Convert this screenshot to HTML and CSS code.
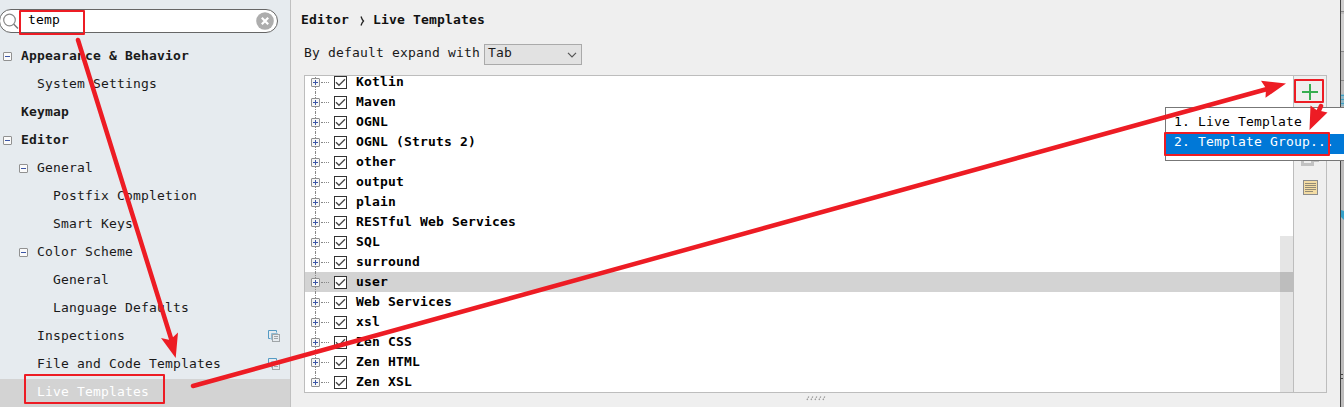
FILE: index.html
```html
<!DOCTYPE html>
<html lang="en">
<head>
<meta charset="utf-8">
<title>Settings</title>
<link rel="stylesheet" href="styles.css">
</head>
<body>
<svg class="defs" width="0" height="0">
  <symbol id="minus" viewBox="0 0 9 9"><rect x=".5" y=".5" width="8" height="8" rx=".5" fill="#fafafa" stroke="#919191"/><path d="M2 4.5h5" stroke="#3c56a6"/></symbol>
  <symbol id="plus" viewBox="0 0 9 9"><rect x=".5" y=".5" width="8" height="8" rx=".5" fill="#f5f5f5" stroke="#919191"/><path d="M2 4.5h5M4.5 2v5" stroke="#3c56a6"/></symbol>
  <symbol id="check" viewBox="0 0 13 13"><rect x=".5" y=".5" width="12" height="12" fill="#fff" stroke="#333"/><path d="M2 6.300l3 3 6-6" fill="none" stroke="#444" stroke-width="1.300"/></symbol>
  <symbol id="copy" viewBox="0 0 12 12"><path d="M2.500 8.500h-2v-8h8v2" fill="none" stroke="#559bc4"/><path d="M4.500 9.500h-1v-6h6v1" fill="none" stroke="#8ebad2"/><rect x="4.500" y="4.500" width="7" height="7" fill="#e6ebef" stroke="#a0a5a8"/><path d="M6 6.500h4M6 8.500h4" stroke="#a0a5a8"/></symbol>
</svg>
<div class="window">
  <aside class="sidebar">
    <div class="search">
      <svg class="lens" width="17" height="17" viewBox="0 0 17 17"><circle cx="6.500" cy="7" r="5.800" fill="none" stroke="#888" stroke-width="1.200"/><path d="M10.800 11.200l4.200 4.200" stroke="#777" stroke-width="1.400"/></svg>
      <span class="query">temp</span>
      <svg class="clear" width="18" height="18" viewBox="0 0 18 18"><circle cx="9" cy="9" r="8.800" fill="#adadad"/><path d="M5.800 5.800l6.400 6.400M12.200 5.800l-6.400 6.400" stroke="#fff" stroke-width="2.200"/></svg>
    </div>
    <nav class="nav">
      <div class="item top"><svg class="fold"><use href="#minus"/></svg><b>Appearance &amp; Behavior</b></div>
      <div class="item mid"><i class="fold"></i>System Settings</div>
      <div class="item top"><i class="fold"></i><b>Keymap</b></div>
      <div class="item top"><svg class="fold"><use href="#minus"/></svg><b>Editor</b></div>
      <div class="item mid"><svg class="fold"><use href="#minus"/></svg>General</div>
      <div class="item deep"><i class="fold"></i>Postfix Completion</div>
      <div class="item deep"><i class="fold"></i>Smart Keys</div>
      <div class="item mid"><svg class="fold"><use href="#minus"/></svg>Color Scheme</div>
      <div class="item deep"><i class="fold"></i>General</div>
      <div class="item deep"><i class="fold"></i>Language Defaults</div>
      <div class="item mid"><i class="fold"></i>Inspections<svg class="copy"><use href="#copy"/></svg></div>
      <div class="item mid"><i class="fold"></i>File and Code Templates<svg class="copy"><use href="#copy"/></svg></div>
      <div class="item mid current"><i class="fold"></i>Live Templates</div>
    </nav>
  </aside>
  <main class="content">
    <h1 class="crumbs">Editor<svg width="5" height="10" viewBox="0 0 5 10"><path d="M1 .5Q2 3.500 3.500 5 2 6.500 1 9.500" fill="none" stroke="#222" stroke-width="1.300"/></svg>Live Templates</h1>
    <div class="expand">By default expand with
      <span class="select">Tab<svg width="10" height="6" viewBox="0 0 10 6"><path d="M1 .8l4 4 4-4" fill="none" stroke="#555" stroke-width="1.200"/></svg></span>
    </div>
    <section class="panel">
      <div class="list">
        <div class="row"><svg class="box"><use href="#plus"/></svg><i class="dots"></i><svg class="tick"><use href="#check"/></svg>Kotlin</div>
        <div class="row"><svg class="box"><use href="#plus"/></svg><i class="dots"></i><svg class="tick"><use href="#check"/></svg>Maven</div>
        <div class="row"><svg class="box"><use href="#plus"/></svg><i class="dots"></i><svg class="tick"><use href="#check"/></svg>OGNL</div>
        <div class="row"><svg class="box"><use href="#plus"/></svg><i class="dots"></i><svg class="tick"><use href="#check"/></svg>OGNL (Struts 2)</div>
        <div class="row"><svg class="box"><use href="#plus"/></svg><i class="dots"></i><svg class="tick"><use href="#check"/></svg>other</div>
        <div class="row"><svg class="box"><use href="#plus"/></svg><i class="dots"></i><svg class="tick"><use href="#check"/></svg>output</div>
        <div class="row"><svg class="box"><use href="#plus"/></svg><i class="dots"></i><svg class="tick"><use href="#check"/></svg>plain</div>
        <div class="row"><svg class="box"><use href="#plus"/></svg><i class="dots"></i><svg class="tick"><use href="#check"/></svg>RESTful Web Services</div>
        <div class="row"><svg class="box"><use href="#plus"/></svg><i class="dots"></i><svg class="tick"><use href="#check"/></svg>SQL</div>
        <div class="row"><svg class="box"><use href="#plus"/></svg><i class="dots"></i><svg class="tick"><use href="#check"/></svg>surround</div>
        <div class="row picked"><svg class="box"><use href="#plus"/></svg><i class="dots"></i><svg class="tick"><use href="#check"/></svg>user</div>
        <div class="row"><svg class="box"><use href="#plus"/></svg><i class="dots"></i><svg class="tick"><use href="#check"/></svg>Web Services</div>
        <div class="row"><svg class="box"><use href="#plus"/></svg><i class="dots"></i><svg class="tick"><use href="#check"/></svg>xsl</div>
        <div class="row"><svg class="box"><use href="#plus"/></svg><i class="dots"></i><svg class="tick"><use href="#check"/></svg>Zen CSS</div>
        <div class="row"><svg class="box"><use href="#plus"/></svg><i class="dots"></i><svg class="tick"><use href="#check"/></svg>Zen HTML</div>
        <div class="row last"><svg class="box"><use href="#plus"/></svg><i class="dots"></i><svg class="tick"><use href="#check"/></svg>Zen XSL</div>
        <div class="thumb"></div>
      </div>
      <div class="tools">
        <svg width="16" height="16" viewBox="0 0 16 16"><path d="M0 8h16M8 0v16" stroke="#36ae50" stroke-width="2"/></svg>
        <svg class="dup" width="18" height="16" viewBox="0 0 18 16"><path d="M1.500 1v13.500h10V11M12 10.500h5V5" fill="none" stroke="#c2c2c2" stroke-width="3"/></svg>
        <svg width="15" height="15" viewBox="0 0 15 15"><rect x=".5" y=".5" width="14" height="14" fill="#f3dca4" stroke="#8c8c8c"/><path d="M2 3.500h11M2 5.500h11M2 7.500h11M2 9.500h11M2 11.500h8" stroke="#938b76"/></svg>
      </div>
    </section>
    <div class="grip"><svg width="20" height="6" viewBox="0 0 20 6"><path d="M1 5l2-4M5 5l2-4M9 5l2-4M13 5l2-4M17 5l2-4" stroke="#999" stroke-width="1.300" stroke-dasharray="1.500 1"/></svg></div>
  </main>
  <div class="edge">
    <svg width="3" height="407" viewBox="0 0 3 407"><path d="M0 0h3v12H0zM0 14h3v37H0z" fill="#d0cfcf"/><path d="M0 11.500h3M0 51.500h3M0 80.500h3" stroke="#888"/><path d="M0 94h3v12H0z" fill="#8fb7c6"/><path d="M0 95.500h3M0 99.500h3M0 103.500h3" stroke="#3da0c5"/><path d="M0 210l3 1v9l-3-3z" fill="#35a0c8"/><path d="M0 374.500h2M0 378.500h2" stroke="#444"/></svg>
  </div>
</div>
<div class="menu">
  <div class="option">1. Live Template</div>
  <div class="option active">2. Template Group...</div>
</div>
<svg class="marks" width="1344" height="407" viewBox="0 0 1344 407">
  <g fill="none" stroke="#ed1c24" stroke-width="2" stroke-linejoin="round">
    <rect x="20" y="11" width="64" height="23"/>
    <rect x="25" y="375" width="139" height="28"/>
    <rect x="1295" y="80" width="28" height="22"/>
    <rect x="1165" y="133" width="164" height="22"/>
  </g>
  <g stroke="#ed1c24" stroke-width="4.500" stroke-linecap="round">
    <path d="M78 40l93.500 300M193 386L1269 88.500M1321 106l-5 11"/>
  </g>
  <g fill="#ed1c24">
    <path d="M175.700 358L161 338l9 2 8-7.500z"/>
    <path d="M1286 83.500L1261 80.800l5 7.500-.500 9.500z"/>
    <path d="M1309.500 130L1310.500 105.500l6 4.500 11 2.500z"/>
  </g>
</svg>
</body>
</html>
```
FILE: styles.css
```css
* { box-sizing: border-box; }
body { margin: 0; width: 1344px; height: 407px; overflow: hidden; position: relative; background: #efefef; color: #1a1a1a; font: 13px/20px "DejaVu Sans Mono", "Liberation Mono", monospace; letter-spacing: .174px; }
svg { display: block; flex: none; }
.defs { position: absolute; }
.window { display: flex; height: 407px; }

.sidebar { width: 291px; background: #e6ebef; border-right: 1px solid #c0c0c0; padding-top: 9px; overflow: hidden; }
.search { width: 279px; height: 24px; margin-left: -1px; display: flex; align-items: center; background: #fff; border: 1px solid #666; border-radius: 12px; padding: 0 3px 0 3px; }
.query { flex: 1; padding: 0 0 3px 8px; color: #000; }
.nav { padding-top: 10px; }
.item { height: 28px; display: flex; align-items: center; padding-bottom: 3px; white-space: nowrap; }
.fold { width: 9px; height: 9px; flex: none; margin: 1px 9px 0 0; }
.top { padding-left: 3px; }
.mid { padding-left: 19px; }
.deep { padding-left: 35px; }
.copy { width: 12px; height: 12px; margin: 1px 10px 0 auto; }
.current { background: #d3d3d3; color: #fff; }

.content { flex: 1; min-width: 0; padding: 9px 13px 0; }
.crumbs { margin: 0 0 0 -3px; display: flex; align-items: center; font-size: 13px; line-height: 22px; color: #111; }
.crumbs svg { margin: 2px 8px 0 11px; }
.expand { display: flex; align-items: center; gap: 4px; height: 22px; margin-top: 12px; padding-bottom: 2px; }
.select { width: 98px; height: 21px; display: flex; align-items: center; justify-content: space-between; padding: 0 4px 1px 3px; background: #e2e2e2; border: 1px solid #aaa; line-height: 16px; margin-top: 3px; padding-bottom: 3px; }
.select svg { margin-top: 3px; }
.panel { display: flex; width: 1023px; height: 318px; margin-top: 10px; border: 1px solid #bdbdbd; }
.list { flex: 1; position: relative; background: #fff; overflow: hidden; border-right: 1px solid #bdbdbd; color: #000; font-weight: bold; }
.row { height: 20px; display: flex; align-items: center; padding-left: 6px; line-height: 12px; position: relative; }
.row:first-child { margin-top: -4px; }
.row::before { content: ""; position: absolute; left: 10px; top: 0; height: 20px; border-left: 1px dotted #888; }
.last::before { height: 10px; }
.box { width: 9px; height: 9px; margin-top: 1px; position: relative; }
.dots { width: 8px; border-top: 1px dotted #888; margin: 1px 6px 0 1px; }
.tick { width: 13px; height: 13px; margin: 1px 9px 0 -1px; }
.picked { background: #d3d3d3; }
.thumb { position: absolute; right: 0; top: 160px; width: 13px; height: 156px; background: rgba(0,0,0,.1); }
.tools { width: 32px; display: flex; flex-direction: column; align-items: center; padding-top: 8px; }
.dup { margin: 50px 0 14px; }
.grip { display: flex; justify-content: center; padding: 2px 0 0 1px; }
.edge { width: 4px; border-left: 1px solid #444; background: #bdbcbc; }

.menu { position: absolute; left: 1165px; top: 107px; width: 190px; height: 54px; padding: 5px 0; border: 1px solid #777; background: #fff; color: #000; }
.option { height: 21px; padding: 0 8px; white-space: nowrap; line-height: 18px; }
.active { height: 20px; background: #0078d7; color: #fff; line-height: 15px; }
.marks { position: absolute; left: 0; top: 0; }
```
